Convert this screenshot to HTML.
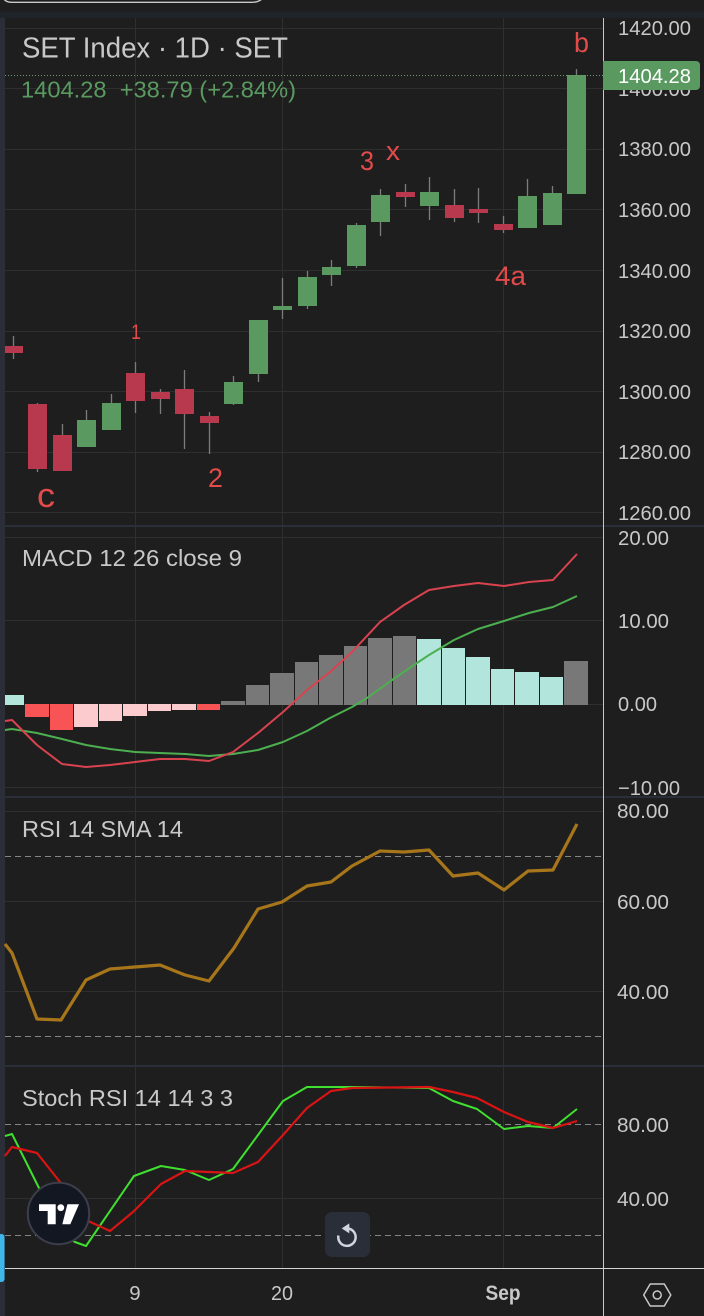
<!DOCTYPE html>
<html lang="en">
<head>
<meta charset="utf-8">
<title>SET Index</title>
<style>
html,body{margin:0;padding:0;background:#1e1e1e;width:704px;height:1316px;overflow:hidden}
svg{display:block}
text{font-family:"Liberation Sans",sans-serif}
</style>
</head>
<body>
<svg width="704" height="1316" viewBox="0 0 704 1316" xmlns="http://www.w3.org/2000/svg">
<rect width="704" height="1316" fill="#1e1e1e"/>
<rect x="0" y="12" width="704" height="6" fill="#1f242b"/>
<rect x="0" y="18" width="5" height="1298" fill="#2b2e36"/>
<path d="M2 -6Q3 2.3 12 2.3H252Q259 2.3 263 -2" fill="none" stroke="#c8c8c8" stroke-width="1.4"/>

<!-- grid -->
<g stroke="#2f2f2f" stroke-width="1" fill="none">
<path d="M135.5 18V1268M282.5 18V1268M503.5 18V1268"/>
<path d="M5 28.5H603M5 88.5H603M5 149.5H603M5 209.5H603M5 270.5H603M5 331.5H603M5 391.5H603M5 452.5H603M5 512.5H603"/>
<path d="M5 537.5H603M5 620.5H603M5 704.5H603M5 787.5H603"/>
<path d="M5 811.5H603M5 901.5H603M5 991.5H603"/>
<path d="M5 1198.5H603"/>
</g>
<g stroke="#858585" stroke-width="1" stroke-dasharray="6 4" fill="none">
<path d="M5 856.5H603M5 1036.5H603M5 1124.5H603M5 1235.5H603"/>
</g>

<!-- wicks -->
<g stroke="#7c7c7c" stroke-width="1.3" fill="none">
<path d="M13.5 336V359M37.5 403V472M62.5 424V471M86.5 410V447M111.5 394V430M135.5 362V413M160.5 389V414M184.5 370V449M209.5 412V454M233.5 376V405M258.5 320V382M282.5 278V319M307.5 271V309M331.5 260V286M356.5 223V268M380.5 189V236M405.5 184V207M429.5 177V220M454.5 189V222M478.5 188V223M503.5 216V233M527.5 179V228M552.5 186V225M576.5 69V194"/>
</g>
<!-- red bodies -->
<g fill="#b8394e">
<rect x="5" y="346" width="18" height="7"/>
<rect x="28" y="404" width="19" height="65"/>
<rect x="53" y="435" width="19" height="36"/>
<rect x="126" y="373" width="19" height="28"/>
<rect x="151" y="392" width="19" height="7"/>
<rect x="175" y="389" width="19" height="25"/>
<rect x="200" y="416" width="19" height="7"/>
<rect x="396" y="192" width="19" height="5"/>
<rect x="445" y="205" width="19" height="13"/>
<rect x="469" y="209" width="19" height="4"/>
<rect x="494" y="224" width="19" height="6"/>
</g>
<!-- green bodies -->
<g fill="#5a9a60">
<rect x="77" y="420" width="19" height="27"/>
<rect x="102" y="403" width="19" height="27"/>
<rect x="224" y="382" width="19" height="22"/>
<rect x="249" y="320" width="19" height="54"/>
<rect x="273" y="306" width="19" height="4"/>
<rect x="298" y="277" width="19" height="29"/>
<rect x="322" y="267" width="19" height="8"/>
<rect x="347" y="225" width="19" height="41"/>
<rect x="371" y="195" width="19" height="27"/>
<rect x="420" y="192" width="19" height="14"/>
<rect x="518" y="196" width="19" height="32"/>
<rect x="543" y="193" width="19" height="32"/>
<rect x="567" y="75" width="19" height="119"/>
</g>
<path d="M5 75.5H603" stroke="#6f9a72" stroke-width="1" stroke-dasharray="1 2" fill="none"/>

<!-- annotations -->
<g fill="#e34b4b" font-size="27">
<text x="574" y="52" font-size="28" textLength="15" lengthAdjust="spacingAndGlyphs">b</text>
<text x="360" y="170" textLength="14" lengthAdjust="spacingAndGlyphs">3</text>
<text x="386" y="160" textLength="14" lengthAdjust="spacingAndGlyphs">x</text>
<text x="495" y="285" textLength="31" lengthAdjust="spacingAndGlyphs">4a</text>
<text x="131" y="339" font-size="21" textLength="10" lengthAdjust="spacingAndGlyphs">1</text>
<text x="208" y="487" textLength="15" lengthAdjust="spacingAndGlyphs">2</text>
<text x="37" y="507" font-size="34" textLength="18" lengthAdjust="spacingAndGlyphs">c</text>
</g>

<!-- legends -->
<text x="22" y="57.5" font-size="29" fill="#c8c8c8" textLength="266" lengthAdjust="spacingAndGlyphs">SET Index · 1D · SET</text>
<text x="21" y="97.5" font-size="23" fill="#5a9a60" textLength="275" lengthAdjust="spacingAndGlyphs" xml:space="preserve">1404.28  +38.79 (+2.84%)</text>
<text x="22" y="566" font-size="23" fill="#c8c8c8" textLength="220" lengthAdjust="spacingAndGlyphs">MACD 12 26 close 9</text>
<text x="22" y="837" font-size="23" fill="#c8c8c8" textLength="161" lengthAdjust="spacingAndGlyphs">RSI 14 SMA 14</text>
<text x="22" y="1106" font-size="23" fill="#c8c8c8" textLength="211" lengthAdjust="spacingAndGlyphs">Stoch RSI 14 14 3 3</text>

<!-- MACD histogram -->
<g fill="#b2e6dc">
<rect x="5" y="695" width="19" height="10"/>
<rect x="417" y="639" width="24" height="66"/>
<rect x="442" y="648" width="23" height="57"/>
<rect x="466" y="657" width="24" height="48"/>
<rect x="491" y="669" width="23" height="36"/>
<rect x="515" y="672" width="24" height="33"/>
<rect x="540" y="677" width="23" height="28"/>
</g>
<g fill="#f95455">
<rect x="25" y="704" width="24" height="13"/>
<rect x="50" y="704" width="23" height="26"/>
<rect x="197" y="704" width="23" height="6"/>
</g>
<g fill="#fccbcd">
<rect x="74" y="704" width="24" height="23"/>
<rect x="99" y="704" width="23" height="17"/>
<rect x="123" y="704" width="24" height="12"/>
<rect x="148" y="704" width="23" height="7"/>
<rect x="172" y="704" width="24" height="6"/>
</g>
<g fill="#787878">
<rect x="221" y="701" width="24" height="4"/>
<rect x="246" y="685" width="23" height="20"/>
<rect x="270" y="673" width="24" height="32"/>
<rect x="295" y="662" width="23" height="43"/>
<rect x="319" y="655" width="24" height="50"/>
<rect x="344" y="646" width="23" height="59"/>
<rect x="368" y="638" width="24" height="67"/>
<rect x="393" y="636" width="23" height="69"/>
<rect x="564" y="661" width="24" height="44"/>
</g>
<!-- MACD lines -->
<polyline fill="none" stroke="#4caf50" stroke-width="2" stroke-linejoin="round" points="5,730 12,729 37,733 62,739 86,745 110,749 135,752 160,753 185,754 209,756 233,754 258,750 283,742 307,731 330,718 352,707 367,698 392,680 417,663 429,655 454,640 478,629 504,621 529,613 553,607 577,596"/>
<polyline fill="none" stroke="#d9434f" stroke-width="2" stroke-linejoin="round" points="5,721 12,720 37,745 62,764 86,767 110,765 135,762 160,759 185,759 209,761 233,752 258,733 283,712 307,690 330,672 352,652 380,622 404,605 429,590 454,586 478,583 504,586 529,582 553,580 577,554"/>

<!-- RSI -->
<polyline fill="none" stroke="#a8761a" stroke-width="3.2" stroke-linejoin="round" points="5,944 12,953 37,1019 61,1020 86,980 110,969 135,967 160,965 185,975 209,981 234,948 258,909 282,902 307,886 331,882 352,866 380,851 404,852 429,850 453,876 478,873 504,890 528,871 553,870 577,824"/>

<!-- Stoch -->
<polyline fill="none" stroke="#3fe02f" stroke-width="2" stroke-linejoin="round" points="5,1136 12,1134 39,1188 62,1236 75,1242 86,1246 134,1176 161,1166 185,1170 209,1180 233,1169 258,1135 283,1101 307,1087 352,1087 429,1088 453,1101 477,1109 504,1129 528,1126 553,1128 577,1109"/>
<polyline fill="none" stroke="#d81414" stroke-width="2.2" stroke-linejoin="round" points="5,1156 12,1147 37,1153 60,1182 86,1220 110,1231 133,1212 161,1184 185,1171 209,1172 233,1173 258,1162 283,1135 307,1108 331,1091 352,1088 429,1087 453,1092 477,1098 504,1112 528,1122 553,1128 577,1121"/>

<!-- axis labels -->
<g font-size="20.5" fill="#c8c8c8">
<text x="618" y="35" textLength="73" lengthAdjust="spacingAndGlyphs">1420.00</text>
<text x="618" y="96" textLength="73" lengthAdjust="spacingAndGlyphs">1400.00</text>
<text x="618" y="156" textLength="73" lengthAdjust="spacingAndGlyphs">1380.00</text>
<text x="618" y="217" textLength="73" lengthAdjust="spacingAndGlyphs">1360.00</text>
<text x="618" y="278" textLength="73" lengthAdjust="spacingAndGlyphs">1340.00</text>
<text x="618" y="338" textLength="73" lengthAdjust="spacingAndGlyphs">1320.00</text>
<text x="618" y="399" textLength="73" lengthAdjust="spacingAndGlyphs">1300.00</text>
<text x="618" y="459" textLength="73" lengthAdjust="spacingAndGlyphs">1280.00</text>
<text x="618" y="520" textLength="73" lengthAdjust="spacingAndGlyphs">1260.00</text>
<text x="618" y="545" textLength="51" lengthAdjust="spacingAndGlyphs">20.00</text>
<text x="618" y="628" textLength="51" lengthAdjust="spacingAndGlyphs">10.00</text>
<text x="618" y="711" textLength="39" lengthAdjust="spacingAndGlyphs">0.00</text>
<text x="618" y="795" textLength="62" lengthAdjust="spacingAndGlyphs">−10.00</text>
<text x="617" y="818" textLength="52" lengthAdjust="spacingAndGlyphs">80.00</text>
<text x="617" y="909" textLength="52" lengthAdjust="spacingAndGlyphs">60.00</text>
<text x="617" y="999" textLength="52" lengthAdjust="spacingAndGlyphs">40.00</text>
<text x="617" y="1132" textLength="52" lengthAdjust="spacingAndGlyphs">80.00</text>
<text x="617" y="1206" textLength="52" lengthAdjust="spacingAndGlyphs">40.00</text>
</g>

<!-- separators and axes -->
<g fill="#2a2e39">
<rect x="5" y="525" width="699" height="2"/>
<rect x="5" y="796" width="699" height="2"/>
<rect x="5" y="1065" width="699" height="2"/>
</g>
<rect x="603" y="18" width="1" height="1298" fill="#c8c8c8"/>
<rect x="5" y="1268" width="699" height="1" fill="#d4d4d4"/>

<!-- price tag -->
<path d="M603 61H696a4 4 0 0 1 4 4V86a4 4 0 0 1 -4 4H603Z" fill="#5a9a60"/>
<text x="618" y="83" font-size="20.5" fill="#ffffff" textLength="73" lengthAdjust="spacingAndGlyphs">1404.28</text>

<!-- time axis -->
<g font-size="20.5" fill="#c8c8c8" text-anchor="middle">
<text x="135" y="1300">9</text>
<text x="282" y="1300" textLength="22" lengthAdjust="spacingAndGlyphs">20</text>
<text x="503" y="1300" font-size="21.5" font-weight="bold" textLength="35" lengthAdjust="spacingAndGlyphs">Sep</text>
</g>

<!-- settings -->
<path d="M643.7 1295L650.2 1284H664.3L670.8 1295L664.3 1306H650.2Z" fill="none" stroke="#c8c8c8" stroke-width="1.5" stroke-linejoin="round"/>
<circle cx="657.2" cy="1295" r="4" fill="none" stroke="#c8c8c8" stroke-width="1.5"/>

<!-- blue tab -->
<path d="M0 1234H1.5a3 3 0 0 1 3 3V1279a3 3 0 0 1 -3 3H0Z" fill="#3db8e8"/>

<!-- TV logo -->
<circle cx="58.5" cy="1213.5" r="30.7" fill="#131722" stroke="#3c3f4a" stroke-width="2"/>
<path d="M39 1204.3H55.7V1224.3H47.7V1211H39Z" fill="#ffffff"/>
<circle cx="60.8" cy="1207.7" r="3.4" fill="#ffffff"/>
<path d="M67.4 1204.3H79L70.3 1224.3H62.3Z" fill="#ffffff"/>

<!-- reset button -->
<rect x="325" y="1212" width="45" height="45" rx="7" fill="#2a2e39"/>
<path d="M348.5 1228.6A8.7 8.7 0 1 1 338.4 1235.5" fill="none" stroke="#d1d4dc" stroke-width="2.5"/>
<path d="M341.7 1228.4L349.3 1223.4V1233.4Z" fill="#d1d4dc"/>
</svg>
</body>
</html>
